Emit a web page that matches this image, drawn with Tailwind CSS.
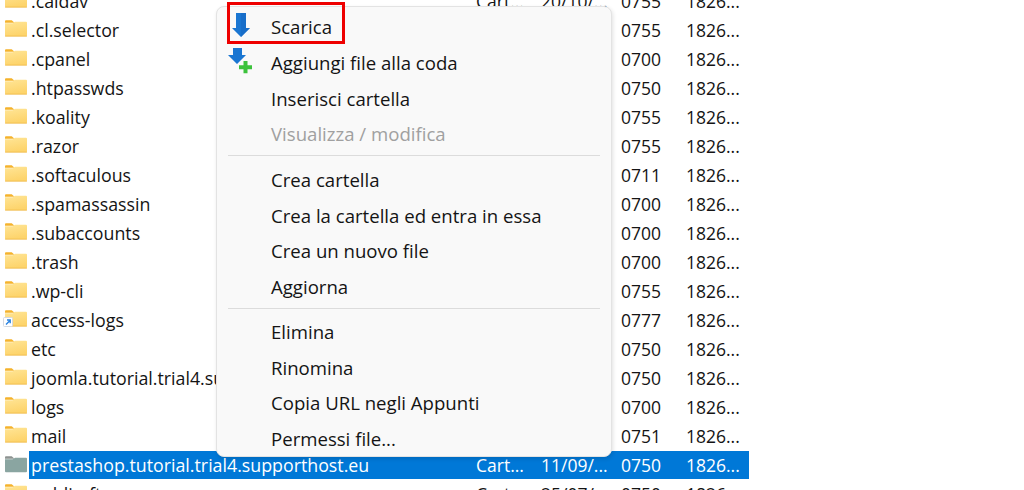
<!DOCTYPE html>
<html>
<head>
    <meta charset="UTF-8"/>
    <title>File manager</title>
    <script src="https://cdn.jsdelivr.net/npm/@tailwindcss/browser@4"></script>
</head>
<body class="bg-white overflow-hidden">

<svg class="absolute h-0 w-0">
    <defs>
        <linearGradient id="fold" x1="0" y1="0" x2="0.3" y2="1">
            <stop offset="0" stop-color="#ffe596"/>
            <stop offset="1" stop-color="#fdd46c"/>
        </linearGradient>
        <symbol id="folder" viewBox="0 0 23 18">
            <path d="M0 2a1 1 0 0 1 1-1h6l3 2.500h-10z" fill="#f5b32c"/>
            <path d="M0 4h8l2.500-1.500h11.500a1 1 0 0 1 1 1v13a1 1 0 0 1-1 1h-21a1 1 0 0 1-1-1z" fill="url(#fold)"/>
            <path d="M0 17h23v0.500a0.500 0.500 0 0 1-0.500 0.500h-22a0.500 0.500 0 0 1-0.500-0.500z" fill="#eeb43e"/>
        </symbol>
        <symbol id="folder-grey" viewBox="0 0 23 18">
            <path d="M0 2a1 1 0 0 1 1-1h6l3 2.500h-10z" fill="#8d9391"/>
            <path d="M0 4h8l2.500-1.500h11.500a1 1 0 0 1 1 1v13a1 1 0 0 1-1 1h-21a1 1 0 0 1-1-1z" fill="#8aa5a1"/>
        </symbol>
    </defs>
</svg>

<div class="relative h-[490px] w-[1024px] overflow-hidden font-['Open_Sans','Noto_Sans',sans-serif] text-[17.500px] text-[#141414]">

    <!-- file list, first row is cut by the top of the window -->
    <div class="-mt-[14px] w-[749px]">
        <div class="flex h-[29px] items-center"><svg class="mb-[3px] ml-[5px] mr-[4px] h-[18px] w-[22px] shrink-0"><use href="#folder"/></svg><span class="w-[445px] pt-[2px] text-[17.800px]">.caldav</span><span class="w-[65px] pt-[2px]">Cart...</span><span class="w-[80px] pt-[2px]">20/10/...</span><span class="w-[65px] pt-[2px]">0755</span><span class="pt-[2px]">1826...</span></div>
        <div class="flex h-[29px] items-center"><svg class="mb-[3px] ml-[5px] mr-[4px] h-[18px] w-[22px] shrink-0"><use href="#folder"/></svg><span class="w-[590px] pt-[2px] text-[17.800px]">.cl.selector</span><span class="w-[65px] pt-[2px]">0755</span><span class="pt-[2px]">1826...</span></div>
        <div class="flex h-[29px] items-center"><svg class="mb-[3px] ml-[5px] mr-[4px] h-[18px] w-[22px] shrink-0"><use href="#folder"/></svg><span class="w-[590px] pt-[2px] text-[17.800px]">.cpanel</span><span class="w-[65px] pt-[2px]">0700</span><span class="pt-[2px]">1826...</span></div>
        <div class="flex h-[29px] items-center"><svg class="mb-[3px] ml-[5px] mr-[4px] h-[18px] w-[22px] shrink-0"><use href="#folder"/></svg><span class="w-[590px] pt-[2px] text-[17.800px]">.htpasswds</span><span class="w-[65px] pt-[2px]">0750</span><span class="pt-[2px]">1826...</span></div>
        <div class="flex h-[29px] items-center"><svg class="mb-[3px] ml-[5px] mr-[4px] h-[18px] w-[22px] shrink-0"><use href="#folder"/></svg><span class="w-[590px] pt-[2px] text-[17.800px]">.koality</span><span class="w-[65px] pt-[2px]">0755</span><span class="pt-[2px]">1826...</span></div>
        <div class="flex h-[29px] items-center"><svg class="mb-[3px] ml-[5px] mr-[4px] h-[18px] w-[22px] shrink-0"><use href="#folder"/></svg><span class="w-[590px] pt-[2px] text-[17.800px]">.razor</span><span class="w-[65px] pt-[2px]">0755</span><span class="pt-[2px]">1826...</span></div>
        <div class="flex h-[29px] items-center"><svg class="mb-[3px] ml-[5px] mr-[4px] h-[18px] w-[22px] shrink-0"><use href="#folder"/></svg><span class="w-[590px] pt-[2px] text-[17.800px]">.softaculous</span><span class="w-[65px] pt-[2px]">0711</span><span class="pt-[2px]">1826...</span></div>
        <div class="flex h-[29px] items-center"><svg class="mb-[3px] ml-[5px] mr-[4px] h-[18px] w-[22px] shrink-0"><use href="#folder"/></svg><span class="w-[590px] pt-[2px] text-[17.800px]">.spamassassin</span><span class="w-[65px] pt-[2px]">0700</span><span class="pt-[2px]">1826...</span></div>
        <div class="flex h-[29px] items-center"><svg class="mb-[3px] ml-[5px] mr-[4px] h-[18px] w-[22px] shrink-0"><use href="#folder"/></svg><span class="w-[590px] pt-[2px] text-[17.800px]">.subaccounts</span><span class="w-[65px] pt-[2px]">0700</span><span class="pt-[2px]">1826...</span></div>
        <div class="flex h-[29px] items-center"><svg class="mb-[3px] ml-[5px] mr-[4px] h-[18px] w-[22px] shrink-0"><use href="#folder"/></svg><span class="w-[590px] pt-[2px] text-[17.800px]">.trash</span><span class="w-[65px] pt-[2px]">0700</span><span class="pt-[2px]">1826...</span></div>
        <div class="flex h-[29px] items-center"><svg class="mb-[3px] ml-[5px] mr-[4px] h-[18px] w-[22px] shrink-0"><use href="#folder"/></svg><span class="w-[590px] pt-[2px] text-[17.800px]">.wp-cli</span><span class="w-[65px] pt-[2px]">0755</span><span class="pt-[2px]">1826...</span></div>
        <div class="flex h-[29px] items-center"><span class="relative mb-[3px] ml-[5px] mr-[4px] h-[18px] w-[22px] shrink-0"><svg class="h-[18px] w-[22px]"><use href="#folder"/></svg><svg class="absolute -left-[2px] top-[8px] h-[10px] w-[10px]" viewBox="0 0 10 10"><rect x="0.500" y="0.500" width="9" height="9" rx="1" fill="#fff" stroke="#d5d9e0"/><path d="M3 7.500l3.500-3.500M4 3h3.200v3.200" fill="none" stroke="#2b83e0" stroke-width="1.400"/></svg></span><span class="w-[590px] pt-[2px] text-[17.800px]">access-logs</span><span class="w-[65px] pt-[2px]">0777</span><span class="pt-[2px]">1826...</span></div>
        <div class="flex h-[29px] items-center"><svg class="mb-[3px] ml-[5px] mr-[4px] h-[18px] w-[22px] shrink-0"><use href="#folder"/></svg><span class="w-[590px] pt-[2px] text-[17.800px]">etc</span><span class="w-[65px] pt-[2px]">0750</span><span class="pt-[2px]">1826...</span></div>
        <div class="flex h-[29px] items-center"><svg class="mb-[3px] ml-[5px] mr-[4px] h-[18px] w-[22px] shrink-0"><use href="#folder"/></svg><span class="w-[590px] pt-[2px] text-[17.800px]">joomla.tutorial.trial4.supporthost.eu</span><span class="w-[65px] pt-[2px]">0750</span><span class="pt-[2px]">1826...</span></div>
        <div class="flex h-[29px] items-center"><svg class="mb-[3px] ml-[5px] mr-[4px] h-[18px] w-[22px] shrink-0"><use href="#folder"/></svg><span class="w-[590px] pt-[2px] text-[17.800px]">logs</span><span class="w-[65px] pt-[2px]">0700</span><span class="pt-[2px]">1826...</span></div>
        <div class="flex h-[29px] items-center"><svg class="mb-[3px] ml-[5px] mr-[4px] h-[18px] w-[22px] shrink-0"><use href="#folder"/></svg><span class="w-[590px] pt-[2px] text-[17.800px]">mail</span><span class="w-[65px] pt-[2px]">0751</span><span class="pt-[2px]">1826...</span></div>
        <div class="flex h-[29px] items-center"><svg class="mb-[1px] ml-[5px] mr-[2px] h-[18px] w-[22px] shrink-0"><use href="#folder-grey"/></svg><div class="flex h-[28px] flex-1 items-center bg-[#0078d7] pl-[2px] text-white"><span class="w-[445px] pt-[2px] text-[17.800px]">prestashop.tutorial.trial4.supporthost.eu</span><span class="w-[65px] pt-[2px]">Cart...</span><span class="w-[80px] pt-[2px]">11/09/...</span><span class="w-[65px] pt-[2px]">0750</span><span class="pt-[2px]">1826...</span></div></div>
        <div class="flex h-[29px] items-center"><svg class="mb-[3px] ml-[5px] mr-[4px] h-[18px] w-[22px] shrink-0"><use href="#folder"/></svg><span class="w-[445px] pt-[2px] text-[17.800px]">public_ftp</span><span class="w-[65px] pt-[2px]">Cart...</span><span class="w-[80px] pt-[2px]">25/07/...</span><span class="w-[65px] pt-[2px]">0750</span><span class="pt-[2px]">1826...</span></div>
    </div>

    <!-- context menu -->
    <div class="absolute left-[216px] top-[6px] h-[451px] w-[396px] rounded-lg border border-[#e3e3e3] bg-[#f9f9f9] px-[11px] pt-[2px] text-[18.600px] shadow-[1px_2px_4px_rgba(0,0,0,0.12)]">
        <div class="flex h-[36px] items-center pl-[43px]">Scarica</div>
        <div class="flex h-[36px] items-center pl-[43px]">Aggiungi file alla coda</div>
        <div class="flex h-[35px] items-center pl-[43px]">Inserisci cartella</div>
        <div class="flex h-[36px] items-center pl-[43px] text-[#a0a0a0]">Visualizza / modifica</div>
        <div class="mb-[6px] mt-[3px] h-px bg-[#dcdcdc]"></div>
        <div class="flex h-[36px] items-center pl-[43px]">Crea cartella</div>
        <div class="flex h-[35px] items-center pl-[43px]">Crea la cartella ed entra in essa</div>
        <div class="flex h-[36px] items-center pl-[43px]">Crea un nuovo file</div>
        <div class="flex h-[35px] items-center pl-[43px]">Aggiorna</div>
        <div class="mb-[5px] mt-[4px] h-px bg-[#dcdcdc]"></div>
        <div class="flex h-[36px] items-center pl-[43px]">Elimina</div>
        <div class="flex h-[35px] items-center pl-[43px]">Rinomina</div>
        <div class="flex h-[36px] items-center pl-[43px]">Copia URL negli Appunti</div>
        <div class="flex h-[35px] items-center pl-[43px]">Permessi file...</div>
    </div>

    <!-- download arrow -->
    <svg class="absolute left-[232px] top-[13px] h-[24px] w-[18px]" viewBox="0 0 18 24">
        <path d="M4 0h10v15h4l-9 9-9-9h4z" fill="#1a76d2"/>
        <path d="M9 0h5v15h4l-9 9z" fill="#1666c0" opacity="0.500"/>
    </svg>
    <!-- add to queue -->
    <svg class="absolute left-[228px] top-[48px] h-[26px] w-[26px]" viewBox="0 0 26 26">
        <path d="M5 0h9v7h4l-9 9-9-9h5z" fill="#1a76d2"/>
        <path d="M15.500 13h4v4.200h4.500v4h-4.500v4h-4v-4h-4.500v-4h4.500z" fill="#3cc23c"/>
    </svg>

    <!-- red highlight drawn on top of the screenshot -->
    <div class="absolute left-[227px] top-[2px] h-[42px] w-[118px] border-[3px] border-[#ee0000]"></div>
</div>

</body>
</html>
